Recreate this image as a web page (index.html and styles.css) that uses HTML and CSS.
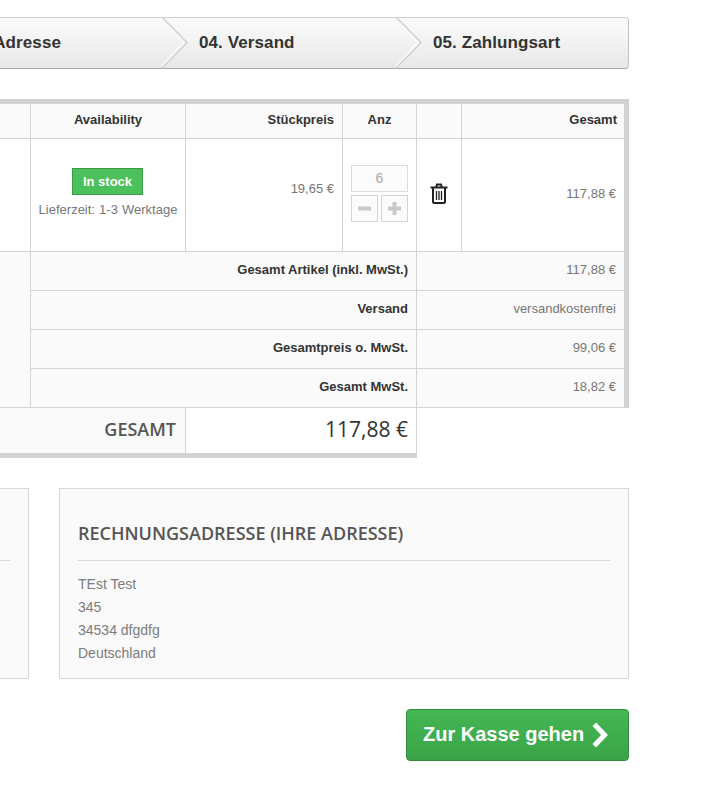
FILE: index.html
```html
<!DOCTYPE html>
<html lang="de">
<head>
<meta charset="utf-8">
<title>Warenkorb</title>
<link rel="stylesheet" href="styles.css">
</head>
<body>
<div class="page">
  <nav class="steps">
    <div class="step step-a"><span>Adresse</span>
      <svg class="chev" width="30" height="52" viewBox="0 0 30 52"><polyline class="chev-w" points="-2,0 23,25.500 -2,52"/><polyline class="chev-l" points="0,0 25,25.500 -1,52"/></svg>
    </div>
    <div class="step step-b"><span>04. Versand</span>
      <svg class="chev" width="30" height="52" viewBox="0 0 30 52"><polyline class="chev-w" points="-2,0 23,25.500 -2,52"/><polyline class="chev-l" points="0,0 25,25.500 -1,52"/></svg>
    </div>
    <div class="step step-c"><span>05. Zahlungsart</span></div>
  </nav>

  <div class="cart">
    <table class="cart-table">
      <colgroup>
        <col class="c1"><col class="c2"><col class="c3"><col class="c4"><col class="c5"><col class="c6">
      </colgroup>
      <tr class="head">
        <th></th>
        <th class="center">Availability</th>
        <th>Stückpreis</th>
        <th class="center">Anz</th>
        <th></th>
        <th>Gesamt</th>
      </tr>
      <tr class="item">
        <td></td>
        <td class="avail">
          <div class="badge">In stock</div>
          <div class="lead">Lieferzeit: 1-3 Werktage</div>
        </td>
        <td class="price">19,65 €</td>
        <td class="qty">
          <div class="qty-box">
            <div class="qty-input">6</div>
            <div class="qty-btns">
              <div class="qty-btn"><svg width="13" height="13" viewBox="0 0 13 13"><rect class="qty-ico" x="0" y="4.500" width="13" height="4"/></svg></div>
              <div class="qty-btn"><svg width="13" height="13" viewBox="0 0 13 13"><path class="qty-ico" d="M4.500 0h4v4.500H13v4H8.500V13h-4V8.500H0v-4h4.500z"/></svg></div>
            </div>
          </div>
        </td>
        <td class="del">
          <svg width="18" height="21" viewBox="0 0 18 21"><path class="trash" d="M0.500 4.500h17M3 4.500v14a1.500 1.500 0 0 0 1.500 1.500h9a1.500 1.500 0 0 0 1.500-1.500v-14M6 4.500l1-3h4l1 3"/><path class="trash-bars" d="M6.500 8v9M9 8v9M11.500 8v9"/></svg>
        </td>
        <td class="sum">117,88 €</td>
      </tr>
      <tr class="sub">
        <td rowspan="4"></td>
        <th colspan="3">Gesamt Artikel (inkl. MwSt.)</th>
        <td colspan="2">117,88 €</td>
      </tr>
      <tr class="sub"><th colspan="3">Versand</th><td colspan="2">versandkostenfrei</td></tr>
      <tr class="sub"><th colspan="3">Gesamtpreis o. MwSt.</th><td colspan="2">99,06 €</td></tr>
      <tr class="sub"><th colspan="3">Gesamt MwSt.</th><td colspan="2">18,82 €</td></tr>
    </table>
    <div class="total">
      <div class="total-label">GESAMT</div>
      <div class="total-value">117,88 €</div>
    </div>
  </div>

  <div class="panels">
    <section class="panel panel-left"><div class="panel-rule"></div></section>
    <section class="panel panel-right">
      <h2 class="panel-title">RECHNUNGSADRESSE (IHRE ADRESSE)</h2>
      <address class="addr">TEst Test<br>345<br>34534 dfgdfg<br>Deutschland</address>
    </section>
  </div>

  <div class="actions">
    <a class="checkout" href="#"><span class="checkout-text">Zur Kasse gehen</span>
      <svg width="18" height="26" viewBox="0 0 18 26"><polyline class="go" points="4,4 12.500,13 4,22"/></svg>
    </a>
  </div>
</div>
</body>
</html>
```

FILE: styles.css
```css
* { box-sizing: border-box; }
html, body { margin: 0; padding: 0; background: #fff; }
body { font-family: "Liberation Sans", Arial, sans-serif; color: #333; overflow: hidden; }
.page { width: 629px; padding-top: 17px; height: 810px; }

.steps { display: flex; height: 52px; }
.step {
  position: relative; display: flex; align-items: center; height: 52px;
  background: linear-gradient(#fbfbfb, #e8e8e8);
  border-top: 1px solid #cfcfcf; border-bottom: 1px solid #a9a9a9;
  font-size: 17px; font-weight: bold; color: #333; letter-spacing: 0.100px;
}
.step-a { width: 162px; justify-content: flex-end; padding-right: 101px; }
.step-b { width: 234px; padding-left: 37px; }
.step-c { width: 233px; padding-left: 37px; border-right: 1px solid #c4c4c4; border-radius: 0 4px 4px 0; }
.chev { position: absolute; top: -1px; z-index: 2; }
.step-a .chev { left: 162px; }
.step-b .chev { left: 234px; }
.chev-w { fill: none; stroke: #fafafa; stroke-width: 3; }
.chev-l { fill: none; stroke: #cfcfcf; stroke-width: 1.500; }

.cart { margin-top: 30px; }
.cart-table {
  width: 629px; table-layout: fixed; border-collapse: separate; border-spacing: 0;
  border-top: 5px solid #d2d2d2; border-right: 5px solid #d2d2d2;
  font-size: 13px;
}
.c1 { width: 31px; }
.c2 { width: 155px; }
.c3 { width: 157px; }
.c4 { width: 74px; }
.c5 { width: 45px; }
.c6 { width: 162px; }
.cart-table th, .cart-table td {
  border-right: 1px solid #d4d4d4; border-bottom: 1px solid #d4d4d4;
  padding: 0 8px; text-align: right; vertical-align: middle;
}
.cart-table tr > :last-child { border-right: 0; }
.cart-table th { color: #333; font-weight: bold; font-size: 13px; }
.cart-table td { color: #777; font-size: 13px; }
.cart-table .center { text-align: center; }
.head { height: 35px; background: #fafafa; }
.cart-table .head th { padding-bottom: 3px; }
.cart-table .head th:last-child { padding-right: 7px; }
.item { height: 113px; }
.sub { height: 39px; background: #fafafa; }
.cart-table .sub td, .cart-table .sub th { padding-right: 8px; padding-bottom: 4px; }
.cart-table .sub td:first-child { padding: 0; }
.cart-table td.avail { padding: 29px 0 0; vertical-align: top; }
.badge {
  width: 71px; height: 27px; line-height: 25px; margin-left: 41px;
  background: #4cc05a; border: 1px solid #3a9a48;
  color: #fff; font-size: 13px; font-weight: bold; text-align: center;
}
.lead { margin-top: 7px; text-align: center; font-size: 13px; color: #777; word-spacing: 0.500px; }
.cart-table td.price { padding-bottom: 13px; }
.cart-table td.sum { padding-bottom: 4px; }
.cart-table td.qty { padding: 0 8px; }
.qty-box { display: flex; flex-direction: column; gap: 3px; width: 57px; margin-bottom: 3px; }
.qty-input {
  height: 27px; line-height: 25px; text-align: center; color: #aaa; font-size: 14px;
  background: #fbfbfb; border: 1px solid #dcdcdc;
}
.qty-btns { display: flex; justify-content: space-between; }
.qty-btn {
  display: flex; align-items: center; justify-content: center;
  width: 27px; height: 27px; background: #fbfbfb; border: 1px solid #d4d4d4;
}
.qty-ico { fill: #c9c9c9; }
.cart-table td.del { padding: 0; text-align: center; }
.del svg { display: block; margin: 0 auto 4px; }
.trash { fill: none; stroke: #222; stroke-width: 2; }
.trash-bars { fill: none; stroke: #222; stroke-width: 1.300; }

.total {
  display: flex; width: 417px; height: 50px;
  border-bottom: 5px solid #d2d2d2; border-right: 1px solid #d4d4d4;
}
.total-label {
  width: 186px; padding-right: 9px; background: #fafafa; border-right: 1px solid #d4d4d4;
  text-align: right; line-height: 43px;
  font-family: "Open Sans", sans-serif; font-size: 18px; font-weight: 600; color: #555;
}
.total-value {
  flex: 1; padding-right: 8px; text-align: right; line-height: 43px;
  font-family: "Open Sans", sans-serif; font-size: 21px; font-weight: 500; color: #333;
}

.panels { display: flex; gap: 30px; margin-top: 30px; margin-left: -1px; }
.panel { height: 191px; background: #fafafa; border: 1px solid #d8d8d8; }
.panel-left { width: 30px; border-left: 0; padding-top: 71px; }
.panel-rule { width: 11px; border-top: 1px solid #d8d8d8; }
.panel-right { width: 570px; padding: 0 18px; }
.panel-title {
  margin: 0; height: 72px; padding-top: 33px; line-height: 23px;
  border-bottom: 1px solid #d8d8d8;
  font-family: "Open Sans", sans-serif; font-size: 18px; font-weight: 600; color: #555;
}
.addr { margin-top: 12px; font-style: normal; font-size: 14px; line-height: 23px; color: #7c7c7c; }

.actions { display: flex; justify-content: flex-end; margin-top: 30px; }
.checkout {
  display: flex; align-items: center; gap: 8px; width: 223px; height: 52px; padding-left: 16px;
  background: linear-gradient(#44b654, #3aa548);
  border: 1px solid #2f8d3d; border-radius: 4px;
  color: #fff; font-size: 20px; font-weight: bold; text-decoration: none;
}
.checkout-text { padding-bottom: 2px; }
.go { fill: none; stroke: #fff; stroke-width: 5; stroke-linecap: square; }
```
